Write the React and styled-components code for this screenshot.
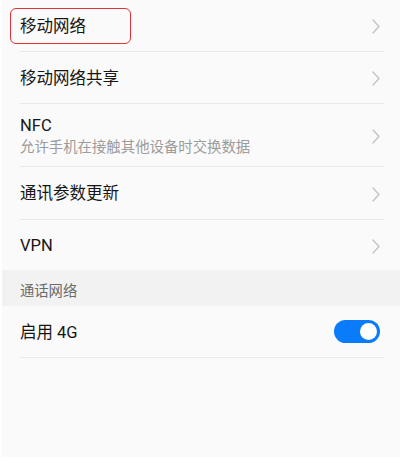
import React from 'react';
import styled, { createGlobalStyle } from 'styled-components';

const GlobalStyle = createGlobalStyle`
  html, body {
    margin: 0;
    padding: 0;
    background: #ffffff;
  }
  body {
    font-family: 'Roboto', 'Noto Sans CJK SC', sans-serif;
    -webkit-font-smoothing: antialiased;
  }
`;

const Frame = styled.div`
  width: 402px;
  height: 459px;
  padding: 0 2px 2px;
  box-sizing: border-box;
  background: #ffffff;
`;

const Panel = styled.main`
  height: 100%;
  background: #fafafa;
  display: flex;
  flex-direction: column;
`;

const Row = styled.div`
  height: ${p => p.$height || 51}px;
  padding: 2px 20px 0 18px;
  display: flex;
  align-items: center;
  justify-content: space-between;
  box-sizing: border-box;
  flex-shrink: 0;
`;

const Divider = styled.div`
  height: 1px;
  margin: 0 16px 0 18px;
  background: #e9e9e9;
  flex-shrink: 0;
`;

const TextBlock = styled.div`
  display: flex;
  flex-direction: column;
  gap: 3px;
`;

const Title = styled.span`
  font-size: 16.5px;
  line-height: 20px;
  color: #161616;
  position: relative;
`;

const Subtitle = styled.span`
  font-size: 14.4px;
  line-height: 18px;
  color: #9c9c9c;
`;

const Highlight = styled(Title)`
  &::after {
    content: '';
    position: absolute;
    left: -10px;
    right: -45px;
    top: -9px;
    bottom: -7px;
    border: 1.5px solid #e0303c;
    border-radius: 6px;
  }
`;

const SectionHeader = styled.div`
  height: 36px;
  padding: 2px 18px 0;
  box-sizing: border-box;
  display: flex;
  align-items: center;
  background: #f2f2f2;
  font-size: 14.3px;
  color: #6a6a6a;
  flex-shrink: 0;
`;

const Toggle = styled.span`
  width: 46px;
  height: 23px;
  border-radius: 12px;
  background: ${p => (p.$on ? '#0a7cfa' : '#d0d0d0')};
  display: flex;
  align-items: center;
  justify-content: ${p => (p.$on ? 'flex-end' : 'flex-start')};
  padding: 0 3px;
  box-sizing: border-box;
  margin-top: -2px;
`;

const Knob = styled.span`
  width: 17px;
  height: 17px;
  border-radius: 50%;
  background: #ffffff;
`;

const Chevron = () => (
  <svg width="8" height="15" viewBox="0 0 8 15">
    <path d="M1 1 L7 7.5 L1 14" fill="none" stroke="#c2c2c2" strokeWidth="1.3" strokeLinecap="round" strokeLinejoin="round" />
  </svg>
);

export default function App() {
  return (
    <Frame>
      <GlobalStyle />
      <Panel>
        <Row>
          <Highlight>移动网络</Highlight>
          <Chevron />
        </Row>
        <Divider />
        <Row>
          <Title>移动网络共享</Title>
          <Chevron />
        </Row>
        <Divider />
        <Row $height={62}>
          <TextBlock>
            <Title>NFC</Title>
            <Subtitle>允许手机在接触其他设备时交换数据</Subtitle>
          </TextBlock>
          <Chevron />
        </Row>
        <Divider />
        <Row $height={52}>
          <Title>通讯参数更新</Title>
          <Chevron />
        </Row>
        <Divider />
        <Row $height={50}>
          <Title>VPN</Title>
          <Chevron />
        </Row>
        <SectionHeader>通话网络</SectionHeader>
        <Row>
          <Title>启用 4G</Title>
          <Toggle $on>
            <Knob />
          </Toggle>
        </Row>
        <Divider />
      </Panel>
    </Frame>
  );
}
